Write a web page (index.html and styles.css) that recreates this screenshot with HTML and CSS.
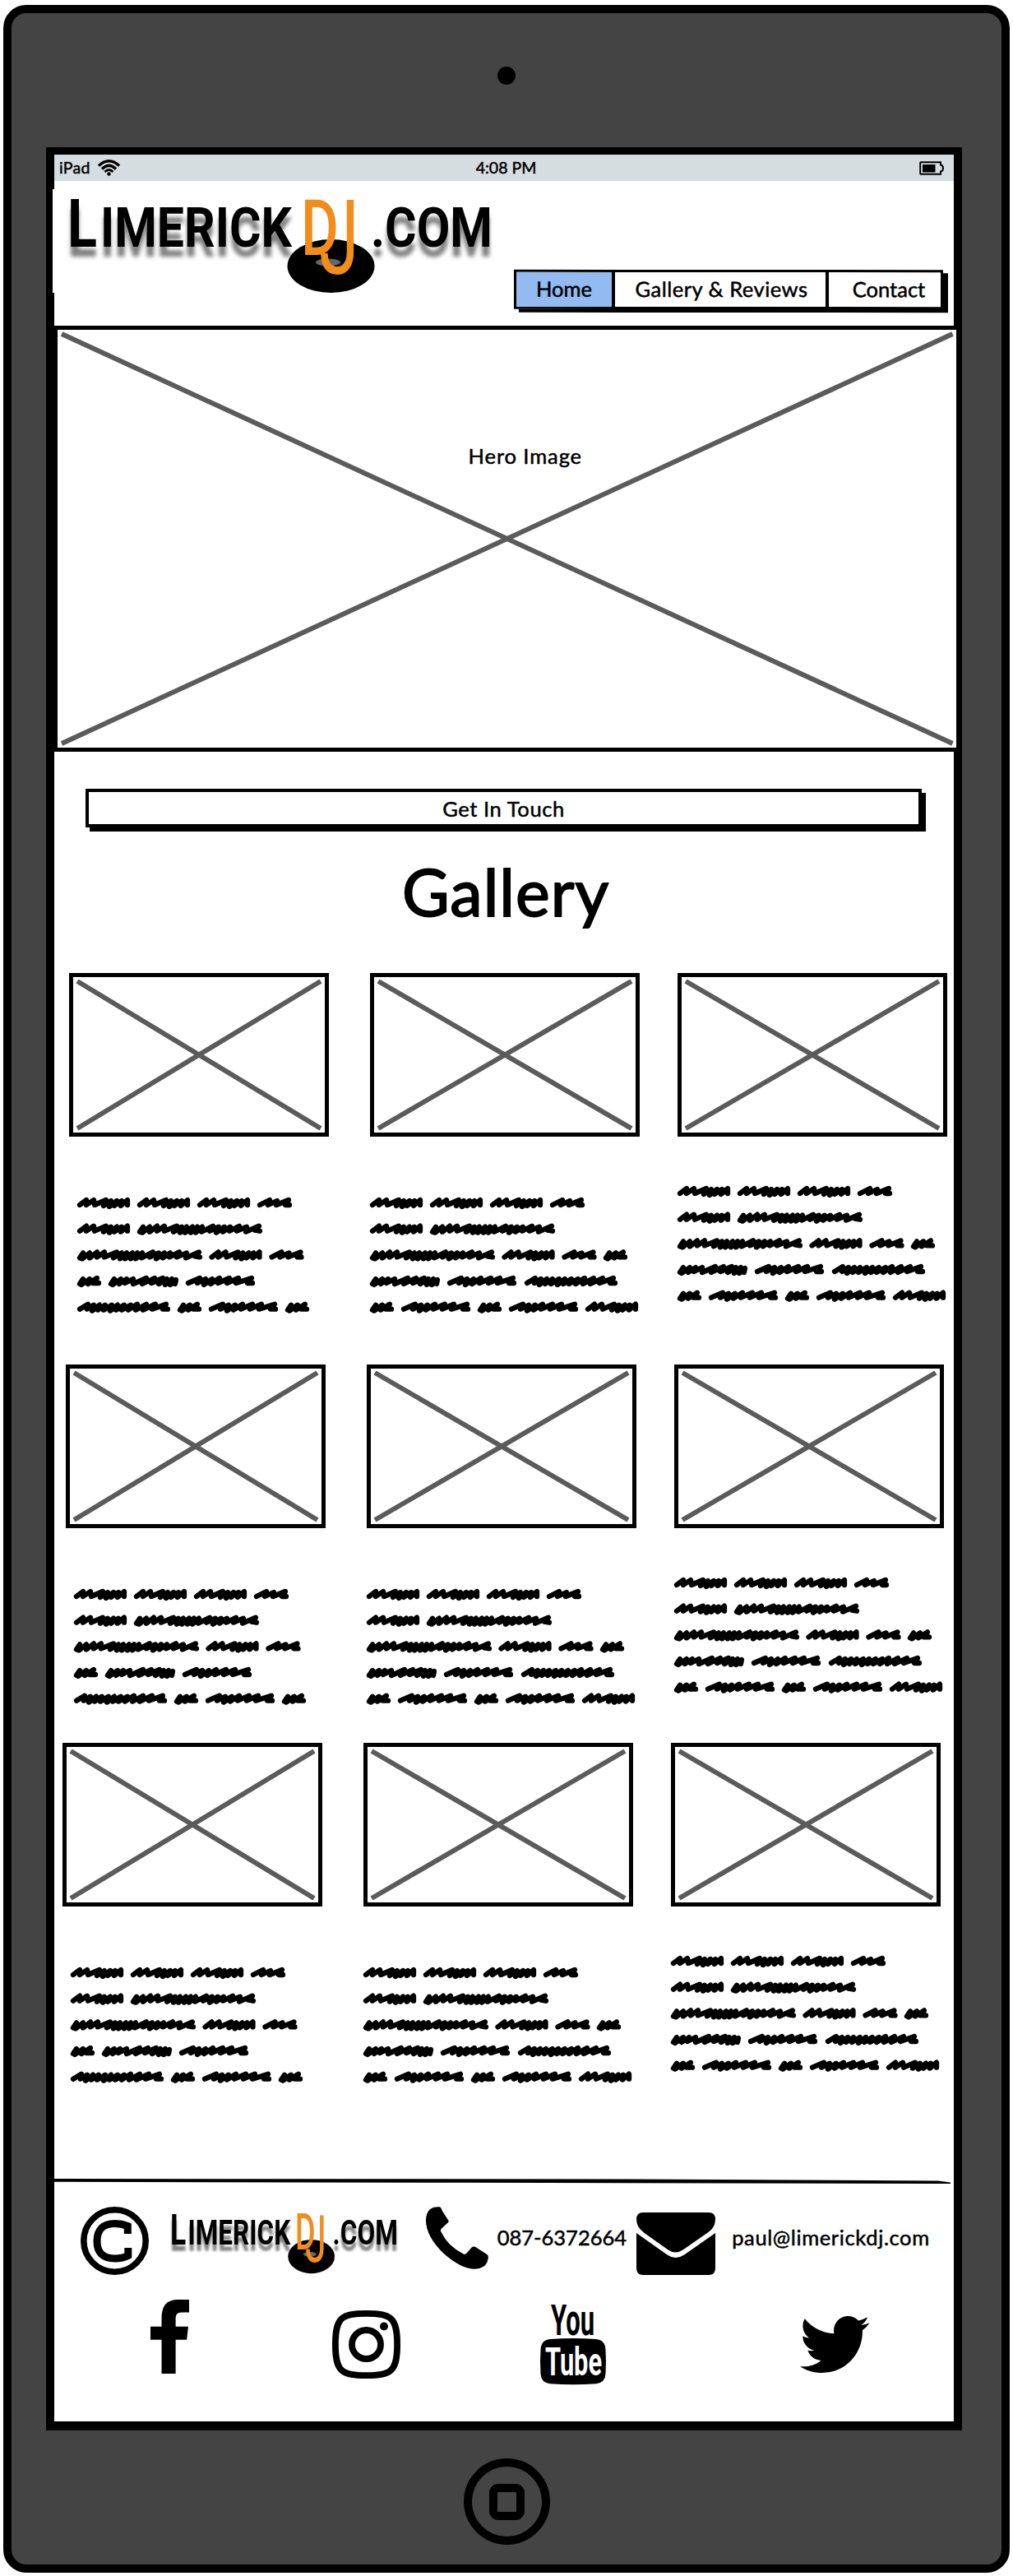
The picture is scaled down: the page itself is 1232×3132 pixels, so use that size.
FILE: index.html
```html
<!DOCTYPE html>
<html lang="en">
<head>
<meta charset="utf-8">
<title>LimerickDJ.com</title>
<link rel="stylesheet" href="styles.css">
</head>
<body>
<svg class="defs" aria-hidden="true">
  <defs>
    <g id="wa"><path d="M3 9L11 3L11 9L20 3L21 9L35 3L32 10L41 4L39 11L48 4L45 10L54 4L53 10L61 3L61 9"/></g>
    <g id="wb"><path d="M3 10L7 4L6 11L15 4L15 10L24 3L24 9L33 3L33 9L48 3L44 10L54 4L52 11L60 4L58 11L67 4L65 11L73 4L71 11L79 4L78 10L92 3L88 9L99 4L96 11L106 4L104 10L113 4L112 9L124 3L121 9L133 4L132 10L148 3L143 8L149 9"/></g>
    <g id="wc"><path d="M3 9L15 3L13 9L24 4L23 9L38 3L34 9L39 9"/></g>
    <g id="wd"><path d="M3 10L7 4L5 11L15 4L13 10L24 3L19 9L26 9"/></g>
    <g id="we"><path d="M3 10L7 4L5 11L15 4L13 10L22 4L20 9L30 4L30 10L46 3L41 10L56 3L52 9L66 3L61 10L71 4L69 11L77 4L75 11L82 5L81 10"/></g>
    <g id="wf"><path d="M3 9L17 3L14 9L24 4L22 11L32 4L30 10L41 3L39 9L53 3L50 9L64 3L61 9L80 3L75 9L81 9"/></g>
    <g id="wg"><path d="M3 9L13 3L12 9L20 4L18 11L27 4L25 10L34 4L32 10L42 4L40 11L49 4L47 10L57 4L54 10L65 4L62 10L73 3L71 10L84 3L80 10L95 3L91 9L108 3L104 9L110 9"/></g>
    <g id="firsttwo">
      <use href="#wa"/><use href="#wa" x="73"/><use href="#wa" x="146"/><use href="#wc" x="219"/>
      <use href="#wa" y="31.7"/><use href="#wb" x="73" y="31.7"/>
      <use href="#wb" y="63.4"/><use href="#wa" x="160.5" y="63.4"/><use href="#wc" x="233.5" y="63.4"/>
    </g>
    <symbol id="para-narrow" viewBox="0 0 328 142" overflow="visible">
      <use href="#firsttwo"/>
      <use href="#wd" y="95"/><use href="#we" x="38" y="95"/><use href="#wf" x="132" y="95"/>
      <use href="#wg" y="126.7"/><use href="#wd" x="122" y="126.7"/><use href="#wf" x="160" y="126.7"/><use href="#wd" x="253" y="126.7"/>
    </symbol>
    <symbol id="para-wide" viewBox="0 0 328 142" overflow="visible">
      <use href="#firsttwo"/><use href="#wd" x="284" y="63.4"/>
      <use href="#we" y="95"/><use href="#wf" x="94" y="95"/><use href="#wg" x="188" y="95"/>
      <use href="#wd" y="126.7"/><use href="#wf" x="38" y="126.7"/><use href="#wd" x="131" y="126.7"/><use href="#wf" x="169" y="126.7"/><use href="#wa" x="262" y="126.7"/>
    </symbol>
    <symbol id="logo" viewBox="0 0 520 124" preserveAspectRatio="none">
      <ellipse cx="322.500" cy="87.500" rx="53" ry="32.500"/>
      <ellipse cx="319" cy="83" rx="15" ry="4.500" fill="#666"/>
      <g class="logo-word">
        <text x="2" y="64" font-size="82" textLength="36" lengthAdjust="spacingAndGlyphs">L</text>
        <text x="42" y="64" font-size="67" textLength="233" lengthAdjust="spacingAndGlyphs">IMERICK</text>
        <text x="371" y="64" font-size="67" textLength="148" lengthAdjust="spacingAndGlyphs">.COM</text>
      </g>
      <g class="logo-dj">
        <text x="286" y="74" font-size="95" textLength="46" lengthAdjust="spacingAndGlyphs">D</text>
        <text class="logo-j" x="308" y="97" font-size="127" textLength="49" lengthAdjust="spacingAndGlyphs">J</text>
      </g>
    </symbol>
  </defs>
</svg>
<div class="device">
  <div class="camera"></div>
  <div class="screen">
    <div class="status">
      <div class="carrier"><span>iPad</span>
        <svg class="wifi" viewBox="0 0 27 20"><g fill="none" stroke="#000" stroke-width="3.300"><path d="M1 7.500Q13.500-4 26 7.500"/><path d="M5 11.500Q13.500 3 22 11.500"/><path d="M8.500 15Q13.500 10 18.500 15" stroke-width="2.800"/></g><circle cx="13.500" cy="17.500" r="2.200"/></svg>
      </div>
      <span class="clock">4:08 PM</span>
      <svg class="battery" viewBox="0 0 30 17"><path d="M2 1.200H26V4.500Q29 5 29 8.500T26 12.500V15.800H2Q1.200 15.800 1.200 15V2Q1.200 1.200 2 1.200Z" fill="none" stroke="#000" stroke-width="2"/><path d="M4 4H19.500V13.500H4Z"/></svg>
    </div>
    <header class="header">
      <div class="brand"><svg class="logo"><use href="#logo"/></svg></div>
      <nav class="nav"><a class="tab active">Home</a><a class="tab mid">Gallery &amp; Reviews</a><a class="tab last">Contact</a></nav>
    </header>
    <section class="hero">
      <svg class="cross" viewBox="0 0 1094 508" preserveAspectRatio="none"><path d="M5 5L1089 503M1089 5L5 503"/></svg>
      <span class="hero-label">Hero Image</span>
    </section>
    <button class="cta">Get In Touch</button>
    <h1 class="title">Gallery</h1>
    <section class="row row1">
      <article class="card"><div class="thumb"><svg viewBox="0 0 306 189" preserveAspectRatio="none"><path d="M5 5L301 184M301 5L5 184"/></svg></div><svg class="para indent"><use href="#para-narrow"/></svg></article>
      <article class="card"><div class="thumb"><svg viewBox="0 0 318 189" preserveAspectRatio="none"><path d="M5 5L313 184M313 5L5 184"/></svg></div><svg class="para"><use href="#para-wide"/></svg></article>
      <article class="card"><div class="thumb"><svg viewBox="0 0 318 189" preserveAspectRatio="none"><path d="M5 5L313 184M313 5L5 184"/></svg></div><svg class="para raised"><use href="#para-wide"/></svg></article>
    </section>
    <section class="row row2">
      <article class="card"><div class="thumb"><svg viewBox="0 0 306 189" preserveAspectRatio="none"><path d="M5 5L301 184M301 5L5 184"/></svg></div><svg class="para indent"><use href="#para-narrow"/></svg></article>
      <article class="card"><div class="thumb"><svg viewBox="0 0 318 189" preserveAspectRatio="none"><path d="M5 5L313 184M313 5L5 184"/></svg></div><svg class="para"><use href="#para-wide"/></svg></article>
      <article class="card"><div class="thumb"><svg viewBox="0 0 318 189" preserveAspectRatio="none"><path d="M5 5L313 184M313 5L5 184"/></svg></div><svg class="para raised"><use href="#para-wide"/></svg></article>
    </section>
    <section class="row row3">
      <article class="card"><div class="thumb"><svg viewBox="0 0 306 189" preserveAspectRatio="none"><path d="M5 5L301 184M301 5L5 184"/></svg></div><svg class="para indent"><use href="#para-narrow"/></svg></article>
      <article class="card"><div class="thumb"><svg viewBox="0 0 318 189" preserveAspectRatio="none"><path d="M5 5L313 184M313 5L5 184"/></svg></div><svg class="para"><use href="#para-wide"/></svg></article>
      <article class="card"><div class="thumb"><svg viewBox="0 0 318 189" preserveAspectRatio="none"><path d="M5 5L313 184M313 5L5 184"/></svg></div><svg class="para raised"><use href="#para-wide"/></svg></article>
    </section>
    <footer class="footer">
      <svg class="rule" viewBox="0 0 1094 7"><path d="M0 0L700 .5L1075 2.500L1090 4.500V6H1070L500 4.800L0 3.800Z"/></svg>
      <div class="contact">
        <svg class="copyright" viewBox="0 0 83 83" fill="none" stroke="#000"><circle cx="41.500" cy="41.500" r="37.700" stroke-width="7.600"/><path d="M57.300 33V23.500Q50 20.500 42 20.500Q20 20.500 20 42Q20 63 42 63Q51 63 57.800 59.500V50" stroke-width="9"/></svg>
        <svg class="logo small"><use href="#logo"/></svg>
        <svg class="phone" viewBox="1310 159 213 229" preserveAspectRatio="none"><path d="M1322 170Q1335 158 1358 160Q1363 164 1366 175L1388 212Q1387 218 1380 222L1362 240Q1358 246 1362 252Q1385 305 1438 332Q1446 335 1450 328L1466 308Q1471 303 1478 306L1518 334Q1524 338 1522 348Q1518 387 1472 387Q1430 386 1370 330Q1308 265 1310 205Q1312 180 1322 170Z"/></svg>
        <span class="tel">087-6372664</span>
        <svg class="mail" viewBox="432 180 238 228" preserveAspectRatio="none"><path d="M452 180H650Q670 180 670 205Q670 235 648 253L574 315Q550 336 526 315L456 255Q432 235 432 205Q432 180 452 180ZM432 255L524 334Q550 356 577 334L670 255V383Q670 408 650 408H452Q432 408 432 383Z"/></svg>
        <span class="email">paul@limerickdj.com</span>
      </div>
      <div class="social">
        <svg class="facebook" viewBox="372 499 132 269" preserveAspectRatio="none"><path d="M410 768V645H372V597H410V565Q410 499 465 499H504V545H478Q458 545 458 565V597H501L496 645H458V768Z"/></svg>
        <svg class="instagram" viewBox="0 0 83 83" fill="none" stroke="#000" stroke-width="7.800"><path d="M41.500 3.900C71 3.900 79.100 8 79.100 41.500S71 79.100 41.500 79.100S3.900 75 3.900 41.500S12 3.900 41.500 3.900Z"/><circle cx="41.500" cy="41.500" r="17.500"/><circle cx="63" cy="19.500" r="5" fill="#000" stroke="none"/></svg>
        <svg class="youtube" viewBox="0 0 80 97"><path d="M12 42Q40 40 68 42Q79 43 79.500 55Q80.500 69 79.500 84Q79 95 68 96.300Q40 98 12 96.300Q1 95 .5 84Q-.5 69 .5 55Q1 43 12 42Z"/><g class="yt-text"><text x="13" y="37" font-size="51" textLength="53" lengthAdjust="spacingAndGlyphs">You</text><text class="white" x="6" y="86" font-size="49" textLength="69" lengthAdjust="spacingAndGlyphs">Tube</text></g></svg>
        <svg class="twitter" viewBox="0 2.250 24 19.520" preserveAspectRatio="none"><path d="M23.954 4.569c-.885.389-1.830.654-2.825.775 1.014-.611 1.794-1.574 2.163-2.723-.951.555-2.005.959-3.127 1.184-.896-.959-2.173-1.559-3.591-1.559-2.717 0-4.920 2.203-4.920 4.917 0 .390.045.765.127 1.124C7.691 8.094 4.066 6.130 1.640 3.161c-.427.722-.666 1.561-.666 2.475 0 1.710.870 3.213 2.188 4.096-.807-.026-1.566-.248-2.228-.616v.061c0 2.385 1.693 4.374 3.946 4.827-.413.111-.849.171-1.296.171-.314 0-.615-.030-.916-.086.631 1.953 2.445 3.377 4.604 3.417-1.680 1.319-3.809 2.105-6.102 2.105-.390 0-.779-.023-1.170-.067 2.189 1.394 4.768 2.209 7.557 2.209 9.054 0 13.999-7.496 13.999-13.986 0-.209 0-.420-.015-.630.961-.689 1.800-1.560 2.460-2.548l-.047-.020z"/></svg>
      </div>
    </footer>
  </div>
  <div class="home"><div class="home-mark"></div></div>
</div>
</body>
</html>
```

FILE: styles.css
```css
* { box-sizing: border-box; }
body { margin: 0; padding: 6px 4px; background: #fff; color: #000; font-family: Lato, sans-serif; -webkit-text-stroke: .5px #000; }
svg { display: block; flex: none; }
.defs { position: absolute; width: 0; height: 0; }
.device { width: 1224px; height: 3122px; border: 10px solid #000; border-radius: 28px; background: #444; display: flex; flex-direction: column; align-items: center; }
.camera { width: 22px; height: 22px; margin-top: 65px; border-radius: 50%; background: #000; }
.screen { width: 1114px; height: 2776px; margin: 76px 6px 0 0; flex: none; background: #fff; border: solid #000; border-width: 9px 10px 11px; display: flex; flex-direction: column; }
.home { width: 105px; height: 105px; margin-top: 34px; border: 10px solid #000; border-radius: 50%; display: flex; align-items: center; justify-content: center; }
.home-mark { width: 43px; height: 44px; border: 10px solid #000; border-radius: 11px; }

.status { height: 32px; flex: none; background: #d6dde0; display: grid; grid-template-columns: 1fr auto 1fr; align-items: center; padding: 0 12px 0 6px; font-size: 19.500px; line-height: 30px; }
.carrier { display: flex; align-items: center; gap: 9px; letter-spacing: .3px; }
.clock { padding-left: 11px; }
.wifi { width: 27px; height: 20px; }
.battery { width: 30px; height: 17px; justify-self: end; }

.header { height: 176px; flex: none; display: flex; }
.brand { margin: 10px 24.600px 0 -2px; padding: 6px 0 0 16px; height: 126px; background: #fff; }
.logo { width: 520px; height: 124px; }
.logo-word { font-family: Roboto, sans-serif; font-weight: 700; filter: drop-shadow(0 12px 2.500px rgba(0,0,0,.5)); }
.logo-dj { font-family: Roboto, sans-serif; font-weight: 500; fill: #f28c1a; -webkit-text-stroke: 0; }
.logo-j { font-weight: 400; }
.nav { width: 522px; height: 48px; margin-top: 107.700px; border: 3.500px solid #000; box-shadow: 6px 4px 0 #000; display: flex; font-size: 25.500px; line-height: 41px; transform: rotate(.05deg); }
.tab { text-align: center; white-space: nowrap; }
.active { width: 120px; background: #93bbf2; border-right: 4px solid #000; }
.mid { width: 260px; padding-left: 3px; border-right: 4px solid #000; letter-spacing: .5px; }
.last { flex: 1; padding-left: 10px; }

.hero { height: 518px; flex: none; margin: 0 -8px 0 -1.500px; border: 5px solid #000; background: #fff; display: grid; justify-items: center; }
.hero > * { grid-area: 1 / 1; }
.cross { width: 100%; height: 508px; }
.cross path, .thumb path { fill: none; stroke: #5b5b5b; stroke-width: 6; }
.hero-label { margin: 138px 0 0 45px; font-size: 25.500px; line-height: 30px; letter-spacing: .9px; }
.cta { width: 1017px; height: 47px; flex: none; margin: 45px 0 0 38px; padding: 0; border: 4.500px solid #000; box-shadow: 5px 5px 0 #000; background: #fff; color: #000; font: 25.500px/38px Lato, sans-serif; -webkit-text-stroke: .5px #000; letter-spacing: .6px; }
.title { margin: 0; height: 177px; flex: none; font-size: 79px; font-weight: 400; line-height: 156px; letter-spacing: 1px; text-align: center; padding-left: 4px; -webkit-text-stroke: 1.800px #000; }

.row { flex: none; display: grid; grid-template-columns: 366px 374px 328px; align-items: start; }
.row1 { height: 476px; padding-left: 18.300px; }
.row2 { height: 460px; padding-left: 14.300px; }
.row3 { height: 530px; padding-left: 10.300px; }
.thumb { width: 328px; height: 199px; border: 5px solid #000; }
.card:first-child .thumb { width: 316px; }
.thumb svg { width: 100%; height: 189px; }
.para { width: 328px; height: 142px; margin-top: 74px; overflow: visible; fill: none; stroke: #000; stroke-width: 6.300; stroke-linecap: round; stroke-linejoin: round; }
.indent { margin-left: 10px; }
.raised { margin-top: 60px; }

.footer { flex: none; }
.rule { width: 1094px; height: 7px; }
.contact { display: flex; height: 110px; align-items: flex-start; font-size: 25.500px; line-height: 30px; padding-left: 32px; }
.copyright { width: 83px; height: 83px; margin-top: 27px; }
.small { width: 278.400px; height: 78.700px; margin: 32px 0 0 25.300px; }
.phone { width: 76px; height: 76px; margin: 27px 0 0 33px; }
.tel { width: 169px; margin-top: 49px; padding-left: 11px; }
.mail { width: 96px; height: 76px; margin: 34px 0 0 11px; }
.email { margin: 49px 0 0 20.500px; letter-spacing: .62px; }
.social { display: flex; padding: 30px 0 0 117px; }
.facebook { width: 47px; height: 90px; }
.instagram { width: 83px; height: 83px; margin: 13px 0 0 174px; }
.youtube { width: 80px; height: 97px; margin: 6px 0 0 170px; overflow: visible; }
.yt-text { font-family: Roboto, sans-serif; font-weight: 700; }
.white { fill: #fff; -webkit-text-stroke: 0; }
.twitter { width: 84.500px; height: 69px; margin: 20px 0 0 236px; }
```
